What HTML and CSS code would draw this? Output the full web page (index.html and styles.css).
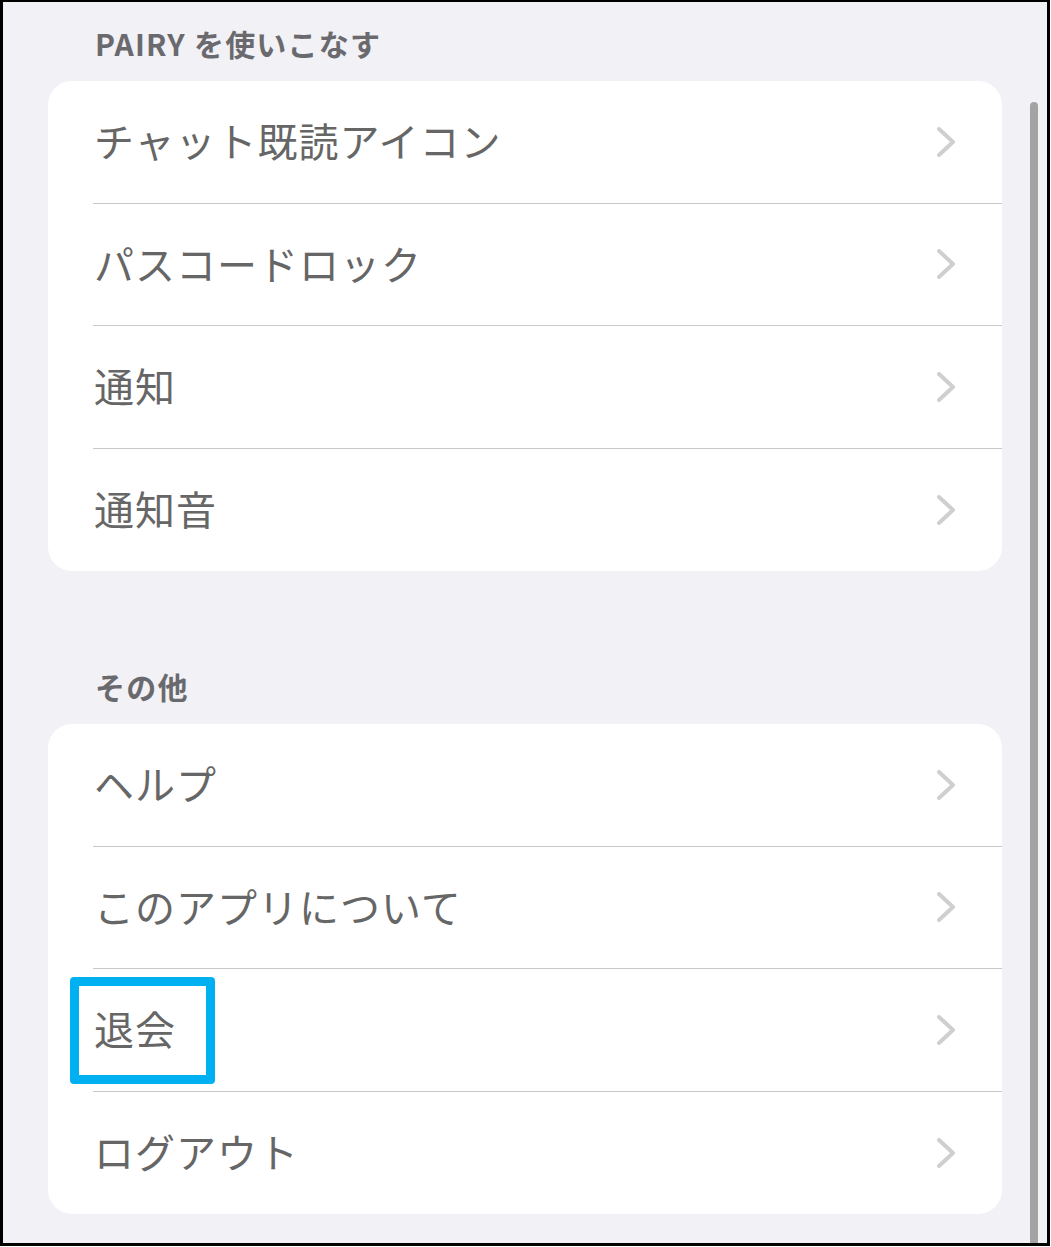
FILE: index.html
```html
<!DOCTYPE html>
<html lang="ja">
<head>
<meta charset="utf-8">
<title>設定</title>
<link rel="stylesheet" href="styles.css">
</head>
<body>
<div class="frame">
  <div class="content">
    <h2 class="section-title">PAIRY を使いこなす</h2>
    <ul class="card">
      <li class="row"><span class="label">チャット既読アイコン</span><svg class="chev" viewBox="0 0 18 30"><path d="M2 2 L16 15 L2 28"/></svg></li>
      <li class="row"><span class="label">パスコードロック</span><svg class="chev" viewBox="0 0 18 30"><path d="M2 2 L16 15 L2 28"/></svg></li>
      <li class="row"><span class="label">通知</span><svg class="chev" viewBox="0 0 18 30"><path d="M2 2 L16 15 L2 28"/></svg></li>
      <li class="row"><span class="label">通知音</span><svg class="chev" viewBox="0 0 18 30"><path d="M2 2 L16 15 L2 28"/></svg></li>
    </ul>
    <h2 class="section-title second">その他</h2>
    <ul class="card">
      <li class="row"><span class="label">ヘルプ</span><svg class="chev" viewBox="0 0 18 30"><path d="M2 2 L16 15 L2 28"/></svg></li>
      <li class="row"><span class="label">このアプリについて</span><svg class="chev" viewBox="0 0 18 30"><path d="M2 2 L16 15 L2 28"/></svg></li>
      <li class="row marked"><span class="label">退会</span><svg class="chev" viewBox="0 0 18 30"><path d="M2 2 L16 15 L2 28"/></svg><span class="highlight"></span></li>
      <li class="row"><span class="label">ログアウト</span><svg class="chev" viewBox="0 0 18 30"><path d="M2 2 L16 15 L2 28"/></svg></li>
    </ul>
  </div>
  <div class="scrollbar"></div>
</div>
</body>
</html>
```
FILE: styles.css
```css
html, body {
  margin: 0;
  padding: 0;
  background: #ffffff;
}

.frame {
  position: relative;
  box-sizing: border-box;
  width: 1050px;
  height: 1246px;
  border: 3px solid #000;
  border-top-width: 2px;
  background: #f1f1f6;
  overflow: hidden;
  font-family: "Noto Sans CJK JP", "Noto Sans", sans-serif;
}

.content {
  padding: 23px 0 0 45px;
  width: 954px;
}

.section-title {
  margin: 0 0 19px 0;
  padding-left: 47px;
  font-size: 30px;
  line-height: 37px;
  font-weight: 700;
  letter-spacing: 1.2px;
  color: #6a6a6e;
}

.section-title.second {
  margin-top: 97px;
}

.card {
  list-style: none;
  margin: 0;
  padding: 0;
  background: #ffffff;
  border-radius: 24px;
  overflow: hidden;
}

.row {
  position: relative;
  box-sizing: border-box;
  height: 122.5px;
  margin-left: 45px;
  padding-right: 47px;
  padding-bottom: 3px;
  display: flex;
  align-items: center;
  justify-content: space-between;
  border-bottom: 1px solid #c9c9cc;
}

.row:last-child {
  border-bottom: none;
}

.label {
  font-size: 40px;
  font-weight: 400;
  color: #666666;
  letter-spacing: 1px;
  padding-left: 1px;
}

.chev {
  width: 18px;
  height: 30px;
  margin-top: 3px;
  fill: none;
  stroke: #cfcfd2;
  stroke-width: 4;
  stroke-linecap: round;
  stroke-linejoin: round;
}

.highlight {
  position: absolute;
  left: -23px;
  top: 8px;
  box-sizing: border-box;
  width: 145px;
  height: 107px;
  border: 9px solid #00b0f0;
  border-radius: 4px;
}

.scrollbar {
  position: absolute;
  left: 1027px;
  top: 100px;
  width: 8px;
  bottom: 0;
  background: #a3a3a3;
  border-radius: 4px 4px 0 0;
}
```
